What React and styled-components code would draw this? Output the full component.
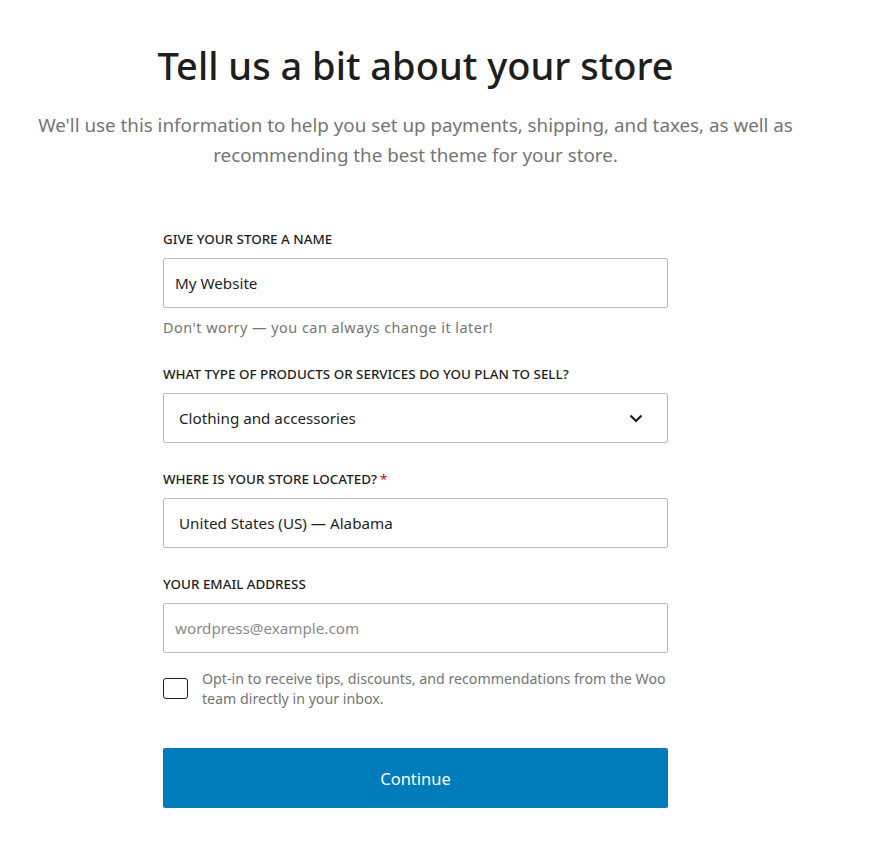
import React from 'react';
import styled, { createGlobalStyle } from 'styled-components';

const GlobalStyle = createGlobalStyle`
  body {
    margin: 0;
    background: #fff;
    font-family: "Noto Sans", "Open Sans", sans-serif;
    color: #1e1e1e;
  }
`;

const Page = styled.div`
  width: 831px;
  display: flex;
  flex-direction: column;
  align-items: center;
  padding-top: 39px;
`;

const Title = styled.h1`
  margin: 0;
  font-size: 38px;
  line-height: 52px;
  font-weight: 500;
  color: #1e1e1e;
  text-align: center;
`;

const Subtitle = styled.p`
  margin: 19px 0 0;
  font-size: 18.8px;
  line-height: 30px;
  color: #757575;
  text-align: center;
`;

const Form = styled.form`
  width: 505px;
  margin-top: 60px;
  display: flex;
  flex-direction: column;
`;

const Field = styled.div`
  display: flex;
  flex-direction: column;
  margin-bottom: ${p => p.$gap ?? 27}px;
`;

const Label = styled.label`
  font-size: 13.4px;
  line-height: 18px;
  font-weight: 500;
  text-transform: uppercase;
  color: #1e1e1e;
  margin-bottom: 10px;
`;

const Required = styled.span`
  color: #cc1818;
  margin-left: 3px;
`;

const Input = styled.input`
  box-sizing: border-box;
  height: 50px;
  width: 100%;
  border: 1px solid #bbb;
  border-radius: 2px;
  padding: 0 ${p => p.$pad || 11}px;
  font-family: inherit;
  font-size: 15.2px;
  color: #1e1e1e;
  outline: none;
  &::placeholder {
    color: #8a8a8a;
  }
`;

const SelectBox = styled.div`
  box-sizing: border-box;
  height: 50px;
  border: 1px solid #bbb;
  border-radius: 2px;
  padding: 0 24px 0 15px;
  display: flex;
  align-items: center;
  justify-content: space-between;
  font-size: 15.2px;
  color: #1e1e1e;
`;

const Help = styled.div`
  margin-top: 11px;
  font-size: 14.4px;
  line-height: 18px;
  letter-spacing: 0.5px;
  color: #757575;
`;

const CheckRow = styled.label`
  display: flex;
  align-items: flex-start;
  gap: 14px;
`;

const Box = styled.span`
  flex: none;
  box-sizing: border-box;
  width: 25px;
  height: 21px;
  margin-top: 9px;
  border: 1.5px solid #1e1e1e;
  border-radius: 3px;
`;

const CheckText = styled.span`
  font-size: 14.2px;
  line-height: 20px;
  color: #757575;
`;

const Button = styled.button`
  margin-top: 39px;
  height: 60px;
  width: 505px;
  border: none;
  border-radius: 2px;
  background: #007cba;
  color: #fff;
  font-family: inherit;
  font-size: 16.5px;
`;

const Chevron = () => (
  <svg width="14" height="9" viewBox="0 0 14 9" fill="none">
    <path d="M1.5 1.5 L7 7 L12.5 1.5" stroke="#1e1e1e" strokeWidth="2.2" />
  </svg>
);

export default function App() {
  return (
    <>
      <GlobalStyle />
      <Page>
        <Title>Tell us a bit about your store</Title>
        <Subtitle>
          We'll use this information to help you set up payments, shipping, and taxes, as well as
          <br />
          recommending the best theme for your store.
        </Subtitle>
        <Form onSubmit={e => e.preventDefault()}>
          <Field $gap={28}>
            <Label>Give your store a name</Label>
            <Input defaultValue="My Website" />
            <Help>Don't worry — you can always change it later!</Help>
          </Field>
          <Field>
            <Label>What type of products or services do you plan to sell?</Label>
            <SelectBox>
              <span>Clothing and accessories</span>
              <Chevron />
            </SelectBox>
          </Field>
          <Field>
            <Label>
              Where is your store located?<Required>*</Required>
            </Label>
            <Input $pad={15} defaultValue="United States (US) — Alabama" />
          </Field>
          <Field $gap={16}>
            <Label>Your email address</Label>
            <Input placeholder="wordpress@example.com" />
          </Field>
          <CheckRow>
            <Box />
            <CheckText>
              Opt-in to receive tips, discounts, and recommendations from the Woo team directly in your inbox.
            </CheckText>
          </CheckRow>
          <Button type="submit">Continue</Button>
        </Form>
      </Page>
    </>
  );
}
